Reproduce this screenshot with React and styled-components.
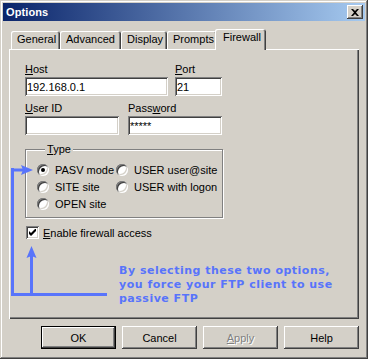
import styled, { createGlobalStyle } from "styled-components";

const GlobalStyle = createGlobalStyle`
  html, body {
    margin: 0;
    padding: 0;
    background: #d4d0c8;
  }
  body {
    font-family: "Liberation Sans", Arial, sans-serif;
    font-size: 11px;
    color: #000;
  }
`;

const Window = styled.div`
  width: 368px;
  height: 359px;
  box-sizing: border-box;
  padding: 3px;
  background: #d4d0c8;
  box-shadow: inset -1px -1px #404040, inset 1px 1px #d4d0c8,
    inset -2px -2px #808080, inset 2px 2px #fff;
  display: flex;
  flex-direction: column;
`;

const TitleBar = styled.div`
  height: 18px;
  display: flex;
  align-items: center;
  justify-content: space-between;
  padding: 0 2px 0 3px;
  background: linear-gradient(to right, #0a246a, #a6caf0);
`;

const Title = styled.span`
  color: #fff;
  font-weight: bold;
  font-size: 11px;
  letter-spacing: 0.1px;
`;

const CloseButton = styled.div`
  width: 16px;
  height: 14px;
  background: #d4d0c8;
  box-shadow: inset -1px -1px #404040, inset 1px 1px #fff,
    inset -2px -2px #808080;
  display: flex;
  align-items: center;
  justify-content: center;
  svg {
    display: block;
  }
`;

const Body = styled.div`
  flex: 1;
  display: flex;
  flex-direction: column;
  padding: 8px 6px 0 6px;
`;

const TabRow = styled.div`
  display: flex;
  align-items: flex-end;
  height: 20px;
  padding-left: 2px;
  position: relative;
  z-index: 1;
`;

const Tab = styled.div`
  box-sizing: border-box;
  width: ${(p) => p.w}px;
  height: ${(p) => (p.active ? 21 : 18)}px;
  margin: ${(p) => (p.active ? "0 -2px -1px -2px" : "0")};
  padding: ${(p) => (p.active ? "2px 0 0 8px" : "2px 0 0 6px")};
  background: #d4d0c8;
  border-radius: 2px 3px 0 0;
  box-shadow: inset 1px 1px #fff, inset -1px 0 #404040, inset -2px 0 #808080;
  line-height: 13px;
  white-space: nowrap;
  position: relative;
  z-index: ${(p) => (p.active ? 2 : 0)};
`;

const Panel = styled.div`
  height: 270px;
  box-sizing: border-box;
  padding: 14px 0 0 16px;
  box-shadow: inset 1px 1px #fff, inset -1px -1px #404040,
    inset -2px -2px #808080;
  position: relative;
  display: flex;
  flex-direction: column;
`;

const Row = styled.div`
  display: flex;
  gap: ${(p) => p.gap}px;
  margin-bottom: 6px;
`;

const Field = styled.div`
  display: flex;
  flex-direction: column;
`;

const Label = styled.label`
  line-height: 13px;
  margin-bottom: 1px;
  white-space: nowrap;
`;

const Input = styled.input`
  width: ${(p) => p.w}px;
  height: 19px;
  box-sizing: border-box;
  margin: 0;
  border: none;
  outline: none;
  padding: 1px 2px 0 2px;
  background: #fff;
  font-family: "Liberation Sans", Arial, sans-serif;
  font-size: 11px;
  color: #000;
  box-shadow: inset 1px 1px #808080, inset -1px -1px #fff,
    inset 2px 2px #404040, inset -2px -2px #d4d0c8;
`;

const Group = styled.fieldset`
  width: 198px;
  box-sizing: border-box;
  margin: 2px 0 0 0;
  padding: 5px 0 5px 11px;
  border: 1px solid #808080;
  box-shadow: inset 1px 1px #fff, 1px 1px #fff;
`;

const Legend = styled.legend`
  padding: 0 2px;
  margin-left: 8px;
  line-height: 13px;
  background: #d4d0c8;
`;

const RadioGrid = styled.div`
  display: grid;
  grid-template-columns: 79px auto;
  grid-auto-rows: 17px;
`;

const Option = styled.div`
  display: flex;
  align-items: center;
  gap: 6px;
  white-space: nowrap;
`;

const RadioMark = styled.span`
  width: 12px;
  height: 12px;
  border-radius: 50%;
  background: #fff;
  flex: none;
  box-shadow: inset 1px 1px #808080, inset -1px -1px #fff,
    inset 2px 2px #404040, inset -2px -2px #d4d0c8;
  display: flex;
  align-items: center;
  justify-content: center;
  &::after {
    content: "";
    width: 4px;
    height: 4px;
    border-radius: 50%;
    background: ${(p) => (p.checked ? "#000" : "transparent")};
  }
`;

const CheckRow = styled.div`
  display: flex;
  align-items: center;
  gap: 4px;
  margin: 8px 0 0 1px;
`;

const CheckMark = styled.span`
  width: 13px;
  height: 13px;
  flex: none;
  background: #fff;
  box-shadow: inset 1px 1px #808080, inset -1px -1px #fff,
    inset 2px 2px #404040, inset -2px -2px #d4d0c8;
  display: flex;
  align-items: center;
  justify-content: center;
`;

const Arrows = styled.svg`
  position: absolute;
  left: 0;
  top: 0;
  pointer-events: none;
`;

const Note = styled.div`
  position: absolute;
  left: 110px;
  top: 215px;
  color: #5874fb;
  font-family: "DejaVu Sans", Verdana, sans-serif;
  font-weight: bold;
  font-size: 11px;
  line-height: 14px;
  letter-spacing: 0.5px;
  white-space: nowrap;
`;

const ButtonRow = styled.div`
  display: flex;
  justify-content: flex-end;
  gap: 6px;
  margin-top: 7px;
`;

const Button = styled.div`
  width: 75px;
  height: 23px;
  box-sizing: border-box;
  display: flex;
  align-items: center;
  justify-content: center;
  background: #d4d0c8;
  color: ${(p) => (p.disabled ? "#808080" : "#000")};
  text-shadow: ${(p) => (p.disabled ? "1px 1px #fff" : "none")};
  border: ${(p) => (p.primary ? "1px solid #000" : "none")};
  box-shadow: inset -1px -1px #404040, inset 1px 1px #fff,
    inset -2px -2px #808080;
`;

const BLUE = "#5874fb";

export default function App() {
  return (
    <Window>
      <GlobalStyle />
      <TitleBar>
        <Title>Options</Title>
        <CloseButton>
          <svg width="8" height="7" viewBox="0 0 8 7">
            <path
              d="M0 0h2l2 2 2-2h2L5 3.5 8 7H6L4 5 2 7H0l3-3.5z"
              fill="#000"
            />
          </svg>
        </CloseButton>
      </TitleBar>
      <Body>
        <TabRow>
          <Tab w={49}>General</Tab>
          <Tab w={61}>Advanced</Tab>
          <Tab w={46}>Display</Tab>
          <Tab w={50}>Prompts</Tab>
          <Tab w={51} active>
            Firewall
          </Tab>
        </TabRow>
        <Panel>
          <Row gap={7}>
            <Field>
              <Label>
                <u>H</u>ost
              </Label>
              <Input w={143} defaultValue="192.168.0.1" readOnly />
            </Field>
            <Field>
              <Label>
                <u>P</u>ort
              </Label>
              <Input w={47} defaultValue="21" readOnly />
            </Field>
          </Row>
          <Row gap={9}>
            <Field>
              <Label>
                <u>U</u>ser ID
              </Label>
              <Input w={94} defaultValue="" readOnly />
            </Field>
            <Field>
              <Label>
                Pass<u>w</u>ord
              </Label>
              <Input w={94} defaultValue="*****" readOnly />
            </Field>
          </Row>
          <Group>
            <Legend>
              <u>T</u>ype
            </Legend>
            <RadioGrid>
              <Option>
                <RadioMark checked />
                PASV mode
              </Option>
              <Option>
                <RadioMark />
                USER user@site
              </Option>
              <Option>
                <RadioMark />
                SITE site
              </Option>
              <Option>
                <RadioMark />
                USER with logon
              </Option>
              <Option>
                <RadioMark />
                OPEN site
              </Option>
            </RadioGrid>
          </Group>
          <CheckRow>
            <CheckMark>
              <svg width="7" height="7" viewBox="0 0 7 7">
                <path d="M0 2v3l2 2 5-5V-1L2 4z" fill="#000" />
              </svg>
            </CheckMark>
            <span>
              <u>E</u>nable firewall access
            </span>
          </CheckRow>

          <Arrows width="350" height="270" viewBox="0 0 350 270">
            <rect x="2" y="119" width="3" height="128" fill={BLUE} />
            <rect x="2" y="119.5" width="12" height="3" fill={BLUE} />
            <path d="M24 121 L12 116 L14 121 L12 126 Z" fill={BLUE} />
            <rect x="2" y="244" width="96" height="3" fill={BLUE} />
            <rect x="21" y="206" width="3" height="40" fill={BLUE} />
            <path d="M22.5 197 L17.5 209 L22.5 207 L27.5 209 Z" fill={BLUE} />
          </Arrows>
          <Note>
            By selecting these two options,
            <br />
            you force your FTP client to use
            <br />
            passive FTP
          </Note>
        </Panel>
        <ButtonRow>
          <Button primary>OK</Button>
          <Button>Cancel</Button>
          <Button disabled>
            <span>
              <u>A</u>pply
            </span>
          </Button>
          <Button>Help</Button>
        </ButtonRow>
      </Body>
    </Window>
  );
}
